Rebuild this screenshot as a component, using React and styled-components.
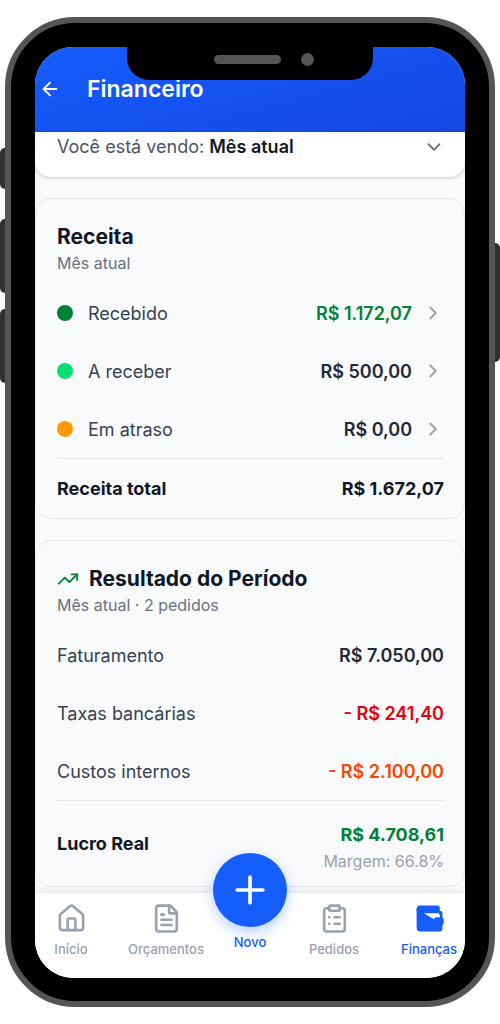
import React from 'react';
import styled, { createGlobalStyle } from 'styled-components';
import {
  ArrowLeft,
  ChevronDown,
  ChevronRight,
  ClipboardList,
  FileText,
  House,
  Plus,
  TrendingUp,
  Wallet,
} from 'lucide-react';

const GlobalStyle = createGlobalStyle`
  * {
    box-sizing: border-box;
  }

  body {
    margin: 0;
    background: #fff;
    color: #101828;
    font-family: Inter, "Liberation Sans", sans-serif;
    font-size: 18px;
  }

  button {
    border: 0;
    padding: 0;
    background: none;
    color: inherit;
    font: inherit;
    cursor: pointer;
  }

  h1, h2, p {
    margin: 0;
  }
`;

const Page = styled.div`
  padding: 17px 5px 18px;
`;

const Phone = styled.div`
  position: relative;
  max-width: 490px;
  margin: 0 auto;
  padding: 24px 24px 23px;
  border: 6px solid #555;
  border-radius: 70px;
  background: #000;
`;

const SideButton = styled.span`
  position: absolute;
  top: ${(props) => props.$top}px;
  ${(props) => props.$side}: -11px;
  width: 5px;
  height: ${(props) => props.$height}px;
  border-radius: ${(props) => (props.$side === 'left' ? '5px 0 0 5px' : '0 5px 5px 0')};
  background: #303030;
`;

const Notch = styled.div`
  position: absolute;
  z-index: 2;
  top: 0;
  left: 50%;
  display: flex;
  align-items: center;
  justify-content: flex-end;
  gap: 20px;
  width: 246px;
  height: 57px;
  padding: 15px 59px 0 0;
  transform: translateX(-50%);
  border-radius: 0 0 22px 22px;
  background: #000;
`;

const Speaker = styled.span`
  width: 67px;
  height: 9px;
  border-radius: 5px;
  background: #555;
`;

const Camera = styled.span`
  width: 13px;
  height: 13px;
  border-radius: 50%;
  background: #555;
`;

const Screen = styled.div`
  display: flex;
  flex-direction: column;
  overflow: hidden;
  border-radius: 38px;
  background: #f9fafc;
`;

const Header = styled.header`
  display: flex;
  align-items: center;
  gap: 26px;
  padding: 24px 4px 25px;
  background: linear-gradient(165deg, #155dfc, #1447e6);
  color: #fff;
`;

const BackButton = styled.button`
  display: flex;
  width: 22px;
`;

const Title = styled.h1`
  font-size: 23px;
  font-weight: 600;
  line-height: 36px;
`;

const Content = styled.main`
  display: flex;
  flex-direction: column;
  gap: 21px;
  padding-bottom: 6px;
`;

const PeriodButton = styled.button`
  display: flex;
  align-items: center;
  justify-content: space-between;
  height: 45px;
  padding: 0 20px 16px 22px;
  border-radius: 0 0 16px 16px;
  background: #fff;
  box-shadow: 0 1px 4px rgba(0, 0, 0, 0.2);
  color: #4a5565;

  strong {
    color: #101828;
    font-weight: 600;
  }
`;

const Card = styled.section`
  padding: 24px 20px 0 21px;
  border: 1px solid #e5e7eb;
  border-radius: 16px;
`;

const CardTitle = styled.h2`
  display: flex;
  align-items: center;
  gap: 10px;
  font-size: 21px;
  font-weight: 700;
  line-height: 28px;
`;

const CardSubtitle = styled.p`
  margin-bottom: 9px;
  color: #6a7282;
  font-size: 16px;
  line-height: 24px;
`;

const Row = styled.div`
  display: flex;
  align-items: center;
  width: 100%;
  height: 58px;
  color: #364153;
`;

const Dot = styled.span`
  width: 16px;
  height: 16px;
  margin-right: 15px;
  border-radius: 50%;
  background: ${(props) => props.$color};
`;

const Value = styled.span`
  margin-left: auto;
  color: ${(props) => props.$color || '#1e2939'};
  font-weight: 600;
`;

const RowChevron = styled(ChevronRight)`
  margin-left: 10px;
  color: #99a1af;
`;

const TotalRow = styled.div`
  display: flex;
  align-items: center;
  justify-content: space-between;
  height: ${(props) => (props.$tall ? 86 : 60)}px;
  border-top: 1px solid #e5e7eb;
  font-weight: 700;
`;

const Profit = styled.div`
  padding-top: 6px;
  color: #008236;
  line-height: 28px;
  text-align: right;
`;

const Margin = styled.p`
  color: #99a1af;
  font-size: 16px;
  font-weight: 400;
  line-height: 24px;
`;

const BottomNav = styled.nav`
  position: relative;
  display: grid;
  grid-template-columns: 72fr 118fr minmax(0, 50fr) 118fr 72fr;
  height: 85px;
  background: #fff;
  box-shadow: 0 -2px 8px rgba(0, 0, 0, 0.08);
`;

const NavItem = styled.a`
  display: flex;
  flex-direction: column;
  align-items: center;
  gap: 5px;
  padding-top: 10px;
  color: ${(props) => (props.$active ? '#155dfc' : '#99a1af')};
  font-size: 13px;
  font-weight: 500;
  line-height: 20px;
  text-decoration: none;
`;

const NewButton = styled.button`
  display: flex;
  flex-direction: column;
  align-items: center;
  justify-self: center;
  align-self: start;
  gap: 5px;
  margin-top: -40px;
  color: #155dfc;
  font-size: 13px;
  font-weight: 500;
  line-height: 20px;
`;

const PlusCircle = styled.span`
  display: flex;
  align-items: center;
  justify-content: center;
  width: 74px;
  height: 74px;
  border-radius: 50%;
  background: #155dfc;
  box-shadow: 0 5px 14px rgba(21, 93, 252, 0.3);
  color: #fff;
`;

const income = [
  { label: 'Recebido', value: 'R$ 1.172,07', dot: '#008236', color: '#008236' },
  { label: 'A receber', value: 'R$ 500,00', dot: '#05df72' },
  { label: 'Em atraso', value: 'R$ 0,00', dot: '#ff9900' },
];

const results = [
  { label: 'Faturamento', value: 'R$ 7.050,00' },
  { label: 'Taxas bancárias', value: '- R$ 241,40', color: '#e7000b' },
  { label: 'Custos internos', value: '- R$ 2.100,00', color: '#f54900' },
];

const App = () => {
  return (
    <Page>
      <GlobalStyle />
      <Phone>
        <SideButton $side="left" $top={125} $height={41} />
        <SideButton $side="left" $top={196} $height={74} />
        <SideButton $side="left" $top={286} $height={74} />
        <SideButton $side="right" $top={220} $height={119} />
        <Notch>
          <Speaker />
          <Camera />
        </Notch>
        <Screen>
          <Header>
            <BackButton aria-label="Voltar">
              <ArrowLeft size={22} />
            </BackButton>
            <Title>Financeiro</Title>
          </Header>
          <Content>
            <PeriodButton>
              <span>
                Você está vendo: <strong>Mês atual</strong>
              </span>
              <ChevronDown size={22} color="#6a7282" />
            </PeriodButton>

            <Card>
              <CardTitle>Receita</CardTitle>
              <CardSubtitle>Mês atual</CardSubtitle>
              {income.map((item) => (
                <Row as="button" key={item.label}>
                  <Dot $color={item.dot} />
                  {item.label}
                  <Value $color={item.color}>{item.value}</Value>
                  <RowChevron size={22} />
                </Row>
              ))}
              <TotalRow>
                <span>Receita total</span>
                <span>R$ 1.672,07</span>
              </TotalRow>
            </Card>

            <Card>
              <CardTitle>
                <TrendingUp size={22} color="#008236" />
                Resultado do Período
              </CardTitle>
              <CardSubtitle>Mês atual · 2 pedidos</CardSubtitle>
              {results.map((item) => (
                <Row key={item.label}>
                  {item.label}
                  <Value $color={item.color}>{item.value}</Value>
                </Row>
              ))}
              <TotalRow $tall>
                <span>Lucro Real</span>
                <Profit>
                  R$ 4.708,61
                  <Margin>Margem: 66.8%</Margin>
                </Profit>
              </TotalRow>
            </Card>
          </Content>
          <BottomNav>
            <NavItem href="#inicio">
              <House size={31} />
              Início
            </NavItem>
            <NavItem href="#orcamentos">
              <FileText size={31} />
              Orçamentos
            </NavItem>
            <NewButton>
              <PlusCircle>
                <Plus size={44} />
              </PlusCircle>
              Novo
            </NewButton>
            <NavItem href="#pedidos">
              <ClipboardList size={31} />
              Pedidos
            </NavItem>
            <NavItem href="#financas" $active>
              <Wallet size={31} fill="currentColor" />
              Finanças
            </NavItem>
          </BottomNav>
        </Screen>
      </Phone>
    </Page>
  );
};

export default App;
